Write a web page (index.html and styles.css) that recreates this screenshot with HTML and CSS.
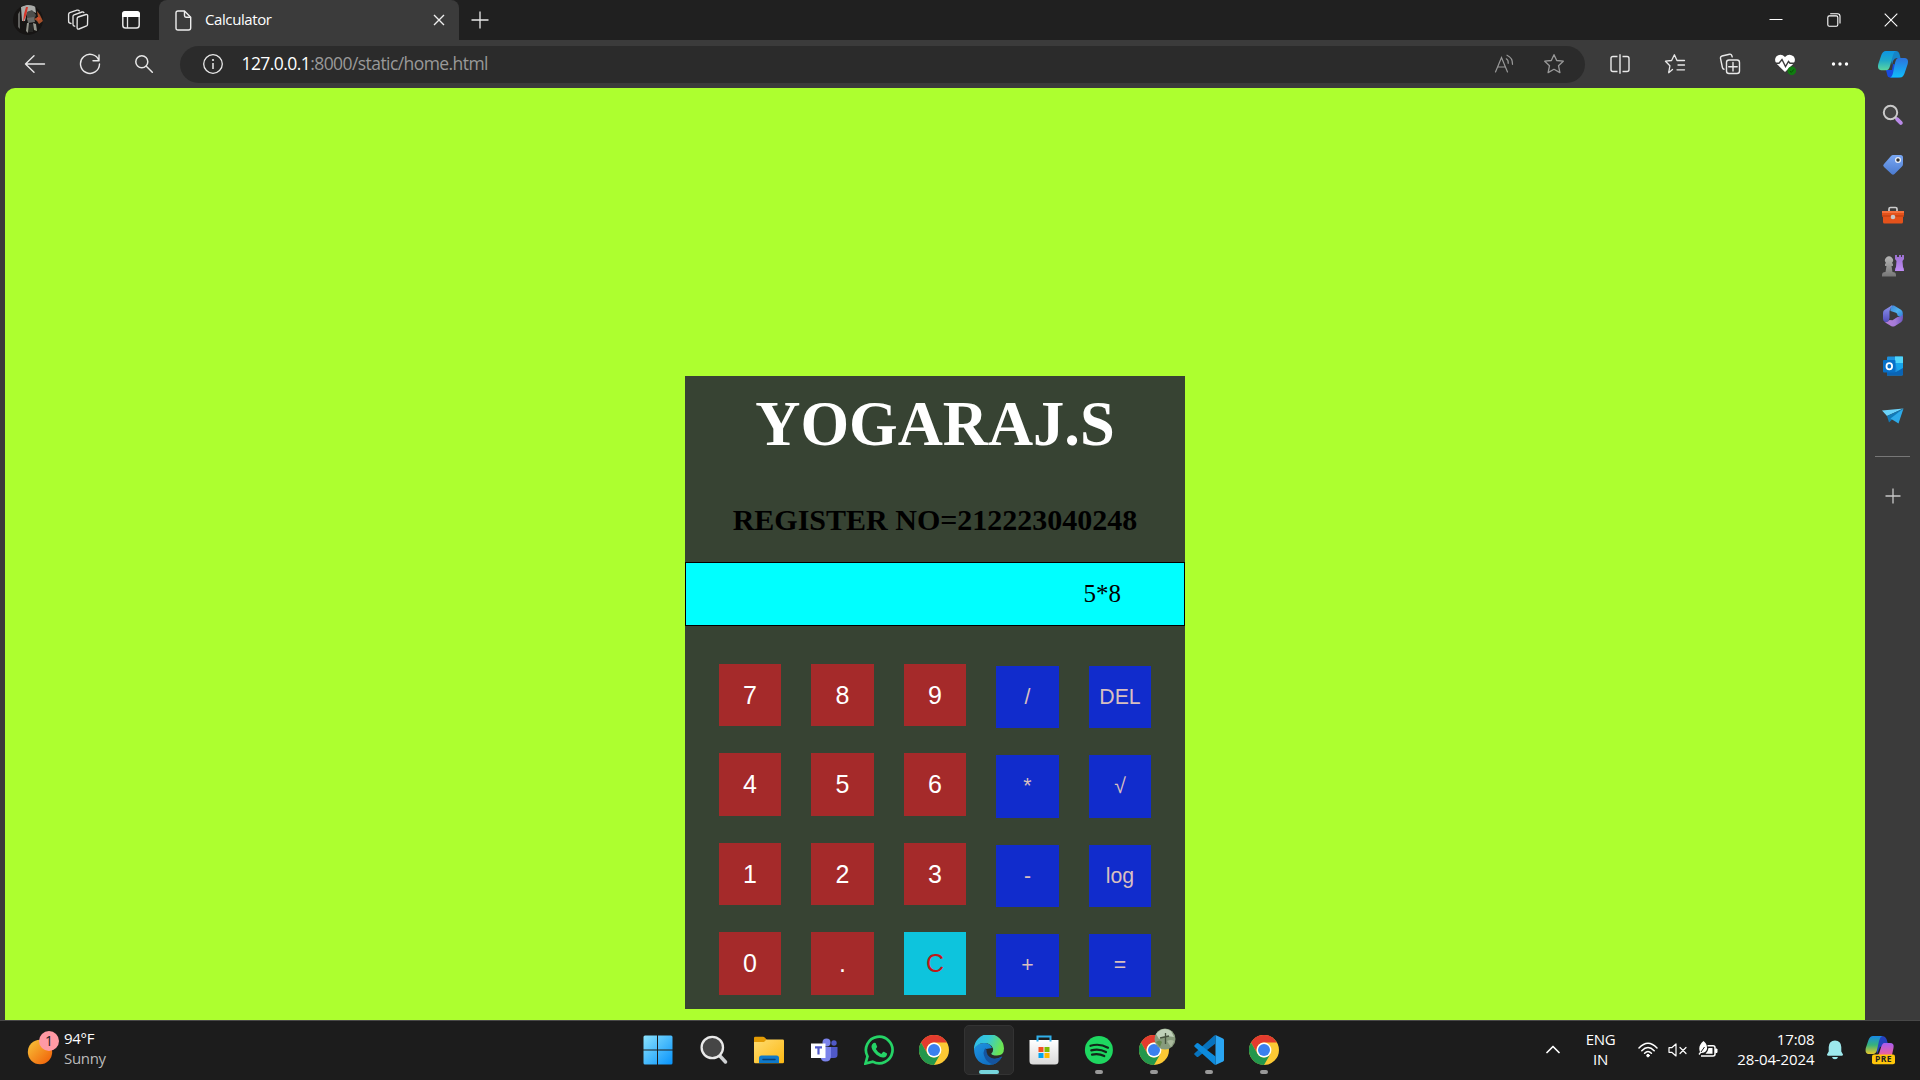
FILE: index.html
```html
<!DOCTYPE html>
<html lang="en">
<head>
<meta charset="utf-8">
<title>Calculator</title>
<link rel="stylesheet" href="styles.css">
</head>
<body>
<svg class="defs" width="0" height="0">
  <defs>
    <linearGradient id="gEdge" x1="0" y1="0" x2="1" y2=".3"><stop offset="0" stop-color="#2cb6ee"/><stop offset=".5" stop-color="#36c8d6"/><stop offset="1" stop-color="#6be453"/></linearGradient>
    <linearGradient id="gEdge2" x1="0" y1="0" x2="1" y2="1"><stop offset="0" stop-color="#1f95e2"/><stop offset="1" stop-color="#0b62b8"/></linearGradient>
    <linearGradient id="gWin" x1="0" y1="0" x2="1" y2="1"><stop offset="0" stop-color="#8be2fd"/><stop offset="1" stop-color="#0793fb"/></linearGradient>
    <linearGradient id="gFold" x1="0" y1="0" x2="1" y2="1"><stop offset="0" stop-color="#ffdc70"/><stop offset="1" stop-color="#fcb813"/></linearGradient>
    <linearGradient id="gSun" x1="0" y1="0" x2="1" y2="1"><stop offset="0" stop-color="#f8c63a"/><stop offset="1" stop-color="#f05a06"/></linearGradient>
    <linearGradient id="gCopA" x1="0" y1="0" x2="0" y2="1"><stop offset="0" stop-color="#0c95e4"/><stop offset=".5" stop-color="#20a9c8"/><stop offset="1" stop-color="#5bd6a0"/></linearGradient>
    <linearGradient id="gCopB" x1="0" y1="0" x2="0" y2="1"><stop offset="0" stop-color="#2c72dd"/><stop offset="1" stop-color="#10bdfb"/></linearGradient>
    <linearGradient id="gPreA" x1="0" y1="0" x2="0" y2="1"><stop offset="0" stop-color="#1789e8"/><stop offset=".5" stop-color="#36b27a"/><stop offset="1" stop-color="#e8c72a"/></linearGradient>
    <linearGradient id="gPreB" x1="0" y1="0" x2="0" y2="1"><stop offset="0" stop-color="#a65cf0"/><stop offset="1" stop-color="#f0609a"/></linearGradient>
    <linearGradient id="gTag" x1="0" y1="0" x2="0" y2="1"><stop offset="0" stop-color="#79a7f3"/><stop offset="1" stop-color="#4b7bd0"/></linearGradient>
    <linearGradient id="gBag" x1="0" y1="0" x2="0" y2="1"><stop offset="0" stop-color="#fff"/><stop offset="1" stop-color="#d9d9d9"/></linearGradient>
    <linearGradient id="gPawn" x1="0" y1="0" x2="0" y2="1"><stop offset="0" stop-color="#b5b5b5"/><stop offset="1" stop-color="#777"/></linearGradient>
    <linearGradient id="gRook" x1="0" y1="0" x2="0" y2="1"><stop offset="0" stop-color="#9a70d0"/><stop offset="1" stop-color="#c08cf5"/></linearGradient>
    <linearGradient id="gM1" x1="0" y1="0" x2="0" y2="1"><stop offset="0" stop-color="#8f95ee"/><stop offset="1" stop-color="#4f49b8"/></linearGradient>
    <linearGradient id="gM2" x1="0" y1="0" x2="1" y2="1"><stop offset="0" stop-color="#3d7fd8"/><stop offset=".5" stop-color="#4fb4ee"/><stop offset="1" stop-color="#2f74d6"/></linearGradient>
    <linearGradient id="gM3" x1="0" y1="0" x2="1" y2="0"><stop offset="0" stop-color="#b87fd8"/><stop offset=".6" stop-color="#a57bd8"/><stop offset="1" stop-color="#7057c0"/></linearGradient>
    <symbol id="chrome" viewBox="0 0 30 30">
      <circle cx="15" cy="15" r="15" fill="#fcc934"/>
      <path d="M2 7.500A15 15 0 0 1 28 7.500H15A7.500 7.500 0 0 0 8.500 18.800Z" fill="#e33b2e"/>
      <path d="M2 7.500L8.500 18.750A7.500 7.500 0 0 0 21.500 18.750L15 30A15 15 0 0 1 2 7.500Z" fill="#23974c"/>
      <circle cx="15" cy="15" r="7.400" fill="#fff"/><circle cx="15" cy="15" r="6" fill="#3b80ee"/>
    </symbol>
  </defs>
</svg>

<div class="screen">
  <header class="titlebar">
    <div class="leading">
      <div class="slot avatar"><svg width="30" height="30" viewBox="0 0 30 30"><clipPath id="av"><circle cx="15" cy="15" r="15"/></clipPath><g clip-path="url(#av)"><path fill="#171514" d="M0 0h30v30H0z"/><path fill="#a9aba8" d="M8 2l5-2 9 0 1 8-4-2-5 1-2 9-3 0z"/><path fill="#d6362a" d="M13 2l2 0-2 9-3 6 1-8z"/><path fill="#4c4d4b" d="M14 7l5-2 4 5-2 5-7 0z"/><path fill="#a4512c" d="M24 6l3 4 3 6-4 3-2-3-3-2 4-2z"/><path fill="#6a6b69" d="M14 13l7-1 1 5-7 1z"/><path fill="#96978e" d="M14 18l2 0-1 10-2-2zM20 18l3 1 1 7-3-1z"/><path fill="#d5482c" d="M24 12l4 1-3 3z"/><path fill="#60605e" d="M5 9l2-3v18l-2-2z"/><path fill="#272725" d="M16 19h4v8h-4z"/></g></svg></div>
      <div class="slot"><svg width="22" height="22" viewBox="0 0 22 22" fill="none" stroke="#e4e4e4" stroke-width="1.35" stroke-linejoin="round" stroke-linecap="round"><path d="M10.200 9.200Q10.300 8.300 11.200 8L19 5.500Q20.800 5.200 20.700 7L20.500 15.500Q20.400 16.500 19.600 16.900L12 20Q10.200 20.600 10.100 18.700Z"/><path d="M7.700 17.200Q6 17.100 6 15.500V7.400Q6 6.200 7.100 5.800L15 3Q16.400 2.600 16.900 3.600"/><path d="M4 14.500Q1.500 14.200 1.600 12.300V5.300Q1.700 4 2.800 3.600L10 1.200Q11.700.8 12.300 1.800"/></svg></div>
      <div class="slot"><svg width="20" height="20" viewBox="0 0 20 20"><rect x="1.800" y="2" width="16.400" height="16" rx="2.800" fill="none" stroke="#e4e4e4" stroke-width="1.500"/><path d="M1 7V4q0-3 3-3h12q3 0 3 3v3z" fill="#fff"/><path d="M6.500 7v11" stroke="#e4e4e4" stroke-width="1.300"/></svg></div>
    </div>
    <div class="tab">
      <svg class="file" width="17" height="21" viewBox="0 0 17 21" fill="none" stroke="#eee" stroke-width="1.400" stroke-linejoin="round"><path d="M3 1H9.500L15.700 7.200V17.800Q15.700 20 13.500 20H3Q1 20 1 18V3Q1 1 3 1Z"/><path d="M9.500 1V5.500Q9.500 7.200 11 7.200H15.700"/></svg>
      <span class="tab-title">Calculator</span>
      <svg width="12" height="12" viewBox="0 0 12 12" stroke="#eee" stroke-width="1.400"><path d="M1 1l10 10M11 1L1 11"/></svg>
    </div>
    <svg class="newtab" width="18" height="18" viewBox="0 0 18 18" stroke="#e8e8e8" stroke-width="1.300"><path d="M9 .5v17M.5 9h17"/></svg>
    <div class="window-controls">
      <svg width="14" height="14" viewBox="0 0 14 14" stroke="#fff"><path d="M.5 6.500h13"/></svg>
      <svg width="14" height="14" viewBox="0 0 14 14" fill="none" stroke="#fff" stroke-width="1.100"><rect x=".8" y="2.900" width="10" height="10.300" rx="1.500"/><path d="M3.200.8H10.500Q13 .8 13 3.300V10.500"/></svg>
      <svg width="14" height="14" viewBox="0 0 14 14" stroke="#fff" stroke-width="1.100"><path d="M.7.700l12.600 12.600M13.300.700L.7 13.300"/></svg>
    </div>
  </header>

  <nav class="toolbar">
    <div class="nav-buttons">
      <svg width="22" height="20" viewBox="0 0 22 20" fill="none" stroke="#e8e8e8" stroke-width="1.400" stroke-linecap="round" stroke-linejoin="round"><path d="M10 1.800L1.500 10l8.500 8.200M1.500 10H20.500"/></svg>
      <svg width="22" height="22" viewBox="0 0 22 22" fill="none" stroke="#e8e8e8" stroke-width="1.400" stroke-linecap="round" stroke-linejoin="round"><path d="M20 7.800A9.500 9.500 0 1 0 20.500 11M20 2v5.800h-6"/></svg>
      <svg width="20" height="20" viewBox="0 0 20 20" fill="none" stroke="#e8e8e8" stroke-width="1.500" stroke-linecap="round"><circle cx="7.800" cy="7.800" r="6"/><path d="M12.300 12.300l6 6"/></svg>
    </div>
    <div class="address">
      <svg width="22" height="22" viewBox="0 0 22 22"><circle cx="11" cy="11" r="9.300" fill="none" stroke="#e8e8e8" stroke-width="1.300"/><path d="M11 10v6" stroke="#e8e8e8" stroke-width="1.500"/><circle cx="11" cy="7" r="1.100" fill="#e8e8e8"/></svg>
      <span class="url"><b>127.0.0.1</b>:8000/static/home.html</span>
      <svg class="aloud" width="20" height="20" viewBox="0 0 20 20" fill="none" stroke="#999" stroke-width="1.200" stroke-linecap="round"><path d="M1.500 18L7.500 3.500L13.500 18M3.500 13h8M12.300 4.800Q14.500 6.200 14.200 9.300M13 1.200Q18.800 3.800 18.500 10.300"/></svg>
      <svg class="star" width="22" height="22" viewBox="0 0 22 22" fill="none" stroke="#999" stroke-width="1.300" stroke-linejoin="round"><path d="M11 1.700L13.700 7.500L20.300 8.200L15.500 12.700L16.900 19.600L11 16.300L5.100 19.600L6.500 12.700L1.700 8.200L8.300 7.500Z"/></svg>
    </div>
    <div class="actions">
      <div><svg width="22" height="22" viewBox="0 0 22 22" fill="none" stroke="#e8e8e8" stroke-width="1.400"><path d="M8.500 3.500H4Q2 3.500 2 5.500V16.500Q2 18.500 4 18.500H8.500M13.500 3.500H18Q20 3.500 20 5.500V16.500Q20 18.500 18 18.500H13.500M11 1.200v19.600"/></svg></div>
      <div><svg width="22" height="22" viewBox="0 0 22 22" fill="none" stroke="#e8e8e8" stroke-width="1.300" stroke-linejoin="round" stroke-linecap="round"><path d="M8.500 16.500L4.700 19.700L5.900 12.800L1.500 8.200L7.600 7.500L10.400 1.800L13 7.500H20.500M14 12h6.500M13 16.800h7.500"/></svg></div>
      <div><svg width="22" height="22" viewBox="0 0 22 22" fill="none" stroke="#e8e8e8" stroke-width="1.400" stroke-linecap="round"><rect x="7.500" y="7" width="13" height="13.500" rx="2.500"/><path d="M14 9.500v8.500M9.700 13.700h8.500M5 16.200Q3.700 16 3.400 14.500L1.500 5.300Q1.200 3.500 3 3L10.500 1.200Q12.500.800 13.200 3.800"/></svg></div>
      <div><svg width="22" height="22" viewBox="0 0 22 22"><path d="M11 19L2.300 10.500Q-.3 6.500 2.500 3.300Q7-.2 11 4Q15-.2 19.500 3.300Q22.300 6.500 19.700 10.500Z" fill="#fff"/><path d="M0 10.300H5L8 6.500L11.500 13.500L14.500 8.500L16 10.300H22" stroke="#3b3b3b" stroke-width="1.400" fill="none"/><circle cx="17.800" cy="17.800" r="4.300" fill="#107c10"/><path d="M15.800 18l1.500 1.400 2.600-3" stroke="#054d05" fill="none"/></svg></div>
      <div><svg width="18" height="6" viewBox="0 0 18 6" fill="#fff"><circle cx="2.500" cy="3" r="1.700"/><circle cx="9" cy="3" r="1.700"/><circle cx="15.500" cy="3" r="1.700"/></svg></div>
    </div>
    <svg class="copilot" width="30" height="27" viewBox="0 0 30 27"><path d="M9 0H18Q20.500 0 21.500 3L22.500 7H19Q16.500 7 15 10L14 14L11 0Z" fill="#1684c8"/><path d="M10 26.500H20Q23 26.500 24.500 22L26 16L15 13L14 19H8L9 23Q9.500 26.500 12 26.500Z" fill="#174be0"/><path d="M8 0H18Q16 .500 15 4L12 15Q11 19.200 8 19.200H3Q-1 19 .300 13L3 5Q4.500 0 8 0Z" fill="url(#gCopA)"/><path d="M20 7H26.500Q31 7 29.700 13L27 21Q25.500 26.500 22 26.500H12Q14 26 15 22L17 12Q18 7.500 20 7Z" fill="url(#gCopB)"/></svg>
  </nav>

  <main class="content">
    <section class="page">
      <div class="calculator">
        <h1>YOGARAJ.S</h1>
        <h2>REGISTER NO=212223040248</h2>
        <div class="display">5*8</div>
        <div class="keys">
          <button>7</button><button>8</button><button>9</button><button class="op">/</button><button class="op">DEL</button>
          <button>4</button><button>5</button><button>6</button><button class="op">*</button><button class="op">√</button>
          <button>1</button><button>2</button><button>3</button><button class="op">-</button><button class="op">log</button>
          <button>0</button><button>.</button><button class="clear">C</button><button class="op">+</button><button class="op">=</button>
        </div>
      </div>
    </section>
    <aside class="sidebar">
      <div><svg width="22" height="22" viewBox="0 0 22 22"><circle cx="8.500" cy="8.500" r="6.700" fill="#444" stroke="#c9c9c9" stroke-width="2"/><path d="M13 13l2 2" stroke="#ccc" stroke-width="2"/><path d="M15.300 15.300l3.500 3.500" stroke="#b98ae8" stroke-width="4" stroke-linecap="round"/></svg></div>
      <div><svg width="22" height="22" viewBox="0 0 22 22"><path d="M11 1H18.500Q21 1 21 3.500V10Q21 11.500 20 12.500L12.500 20Q11 21.500 9.500 20L2 13Q.300 11.500 2 10L9 2Q10 1 11 1Z" fill="url(#gTag)"/><circle cx="16" cy="6" r="2.400" fill="#333" stroke="#e8eefa" stroke-width="1.300"/></svg></div>
      <div><svg width="22" height="18" viewBox="0 0 22 18"><path d="M7 5V3Q7 1.500 8.500 1.500H13.500Q15 1.500 15 3V5" fill="none" stroke="#ccc" stroke-width="1.700"/><path d="M0 5h22v4q0 2-1 2v5q0 1.500-1.500 1.500h-17Q1 17.500 1 16v-5Q0 11 0 9z" fill="#e4521b"/><path d="M0 5h22v2H0z" fill="#f4713d"/><path d="M0 10h22" stroke="#b83a0e"/><circle cx="11" cy="11" r="2.300" fill="#c8c8c8"/></svg></div>
      <div><svg width="22" height="22" viewBox="0 0 22 22"><path d="M13 0h2v2h2V0h2v2h1V0h2v4l-1.500 2L21 12q1 1 1 4h-9q0-3 1-4l.500-6L13 4z" fill="url(#gRook)"/><path d="M4 8a4 4 0 1 1 6 0L11 9v2H9.500l1 6q3.500 0 3.500 3v1.500H0V20q0-3 3.500-3l1-6H3V9z" fill="url(#gPawn)"/></svg></div>
      <div><svg width="22" height="22" viewBox="0 0 22 22"><path d="M9 1Q10.500 0 12 .600L19 4.800Q20.800 6 20.800 8V13.500L15.500 10.500Q15.500 8.500 14 7.700L8.500 6Q7.500 3 9 1Z" fill="url(#gM2)"/><path d="M10.500.300Q7.500 3 7.500 6.500V13Q7.500 16 4.500 17.800L2.500 16.800Q1 16 1 13.800V8Q1 5.800 2.800 4.700L8.500 1.200Q9.500.500 10.500.300Z" fill="url(#gM1)"/><path d="M20.800 9.500V14Q20.800 16 19 17.200L13 20.900Q11 22 9 20.900L2 16.800Q5 18.500 7.500 15L10.500 15.200L15.500 12Q19.500 12 20.800 9.500Z" fill="url(#gM3)"/></svg></div>
      <div><svg width="22" height="20" viewBox="0 0 22 20"><path d="M5 1.500Q5 .500 6 .500H19.500Q21 .500 21 2V18Q21 19.500 19.500 19.500H5Z" fill="#1c91df"/><path d="M13 .500h8V7h-8z" fill="#50d5fa"/><path d="M13 7h8v5l-5 3z" fill="#17a4eb"/><path d="M21 12v6q0 1.500-1.500 1.500H5V16h9z" fill="#0a64b5"/><rect x="1" y="4" width="12.500" height="12.500" rx="1" fill="#0870c8"/><ellipse cx="7.300" cy="10.200" rx="2.800" ry="3.100" fill="none" stroke="#fff" stroke-width="1.800"/></svg></div>
      <div><svg width="22" height="18" viewBox="0 0 22 18"><path d="M0 3.500L21.500 1.500L5 9Z" fill="#6bd3fa"/><path d="M5 9L21.500 1.500L7 15.500Z" fill="#127ab8"/><path d="M8.500 11.500L21.500 1.500L16.500 16.500Z" fill="#2daae9"/></svg></div>
      <hr>
      <svg class="add" width="16" height="16" viewBox="0 0 16 16" stroke="#c8c8c8" stroke-width="1.300"><path d="M8 .5v15M.5 8h15"/></svg>
    </aside>
  </main>

  <footer class="taskbar">
    <div class="weather">
      <svg width="34" height="36" viewBox="0 0 34 36"><circle cx="13" cy="23" r="12.200" fill="url(#gSun)"/><circle cx="22" cy="12" r="10" fill="#ff99a4"/><text x="22" y="17" text-anchor="middle" class="badge">1</text></svg>
      <div class="lines"><span>94°F</span><span class="dim">Sunny</span></div>
    </div>
    <div class="apps">
      <div class="app start"><svg width="30" height="30" viewBox="0 0 30 30" fill="url(#gWin)"><path d="M2 .500H14V14.500H.500V2Q.500.500 2 .500ZM15 .500H28Q29.500.500 29.500 2V14.500H15ZM.500 15.500H14V29.500H2Q.500 29.500.500 28ZM15 15.500H29.500V28Q29.500 29.500 28 29.500H15Z"/></svg></div>
      <div class="app"><svg width="28" height="30" viewBox="0 0 28 30"><path d="M20 21l5.500 6" stroke="#cfd1d3" stroke-width="3.500" stroke-linecap="round"/><circle cx="12.300" cy="12.500" r="10.700" fill="#464646" stroke="#e9e9e9" stroke-width="2.300"/></svg></div>
      <div class="app"><svg width="30" height="28" viewBox="0 0 30 28"><path d="M0 2Q0 .700 1.300.700H9Q10 .700 11 1.700L14 5V9H0Z" fill="#e39b04"/><path d="M0 6H10L12.500 3.500H28.700Q30 3.500 30 4.800V26Q30 27.300 28.700 27.300H1.300Q0 27.300 0 26Z" fill="url(#gFold)"/><path d="M5 27V22Q5 19.500 7.500 19.500H22.500Q25 19.500 25 22V27Z" fill="#0f79c9"/><path d="M9 23.500h12" stroke="#063e73" stroke-width="1.500" stroke-linecap="round"/></svg></div>
      <div class="app"><svg width="28" height="26" viewBox="0 0 28 26"><circle cx="24" cy="6" r="2.700" fill="#5059c9"/><path d="M20 10H27.500V18Q27.500 21 24 21H20Z" fill="#5059c9"/><circle cx="16.500" cy="5.500" r="4" fill="#7b83eb"/><path d="M10 10H21V19Q21 24.500 15.500 24.500Q11 24.500 10 19Z" fill="#7b83eb"/><rect x="1" y="6.500" width="14.500" height="14.500" fill="#fff"/><path d="M5 10.300h7M8.500 10v7.500" stroke="#5059c9" stroke-width="2.200"/></svg></div>
      <div class="app"><svg width="30" height="30" viewBox="0 0 30 30"><path d="M1.500 28.500L3.500 21.300A13.300 13.300 0 1 1 8.700 26.600Z" fill="#1c1c1c" stroke="#25d366" stroke-width="2.700"/><path d="M9.500 8Q10.700 7.300 11.600 8L13.200 11.700Q13.200 12.300 11.800 14Q13.700 17.500 17.300 19L19 17Q19.500 16.500 20 16.800L23 18.400Q23.300 21.300 20 22.500Q17 23.200 12.500 19.800Q7 14.500 7.500 11Q8 8.800 9.500 8Z" fill="#25d366"/></svg></div>
      <div class="app"><svg width="30" height="30"><use href="#chrome"/></svg></div>
      <div class="app active"><svg width="30" height="30" viewBox="0 0 30 30"><path d="M0 14Q3 8 10 8Q16 8 18 13L12 14Q11 20 16 23Q21 25.500 28 21.500Q24 30 15 30Q.500 29 0 14Z" fill="url(#gEdge2)"/><path d="M11.500 13Q8 17 11 23Q13 27.500 19 29.400Q25 27.500 28.300 21.500Q23 25 17.500 23Q12 20 12.500 15Z" fill="#15549e"/><path d="M0 14.500A15 15 0 0 1 30 13.500Q30 20.500 23 20.500Q17.500 20.500 17.300 18.500Q19.500 17 19 13.500Q16.500 7.500 9.500 8Q3 8.500 0 14.500Z" fill="url(#gEdge)"/></svg></div>
      <div class="app"><svg width="30" height="30" viewBox="0 0 30 30"><path d="M8.500 6V1.500H21.500V6" fill="none" stroke="#30afe9" stroke-width="2"/><path d="M.5 5H29.500V26Q29.500 29.500 26 29.500H4Q.500 29.500.500 26Z" fill="url(#gBag)"/><path d="M8.500 5V6.500M21.500 5V6.500" stroke="#30afe9" stroke-width="2"/><path d="M9.500 12h5v5h-5z" fill="#f25022"/><path d="M15.500 12h5v5h-5z" fill="#7fba00"/><path d="M9.500 18h5v5h-5z" fill="#00a4ef"/><path d="M15.500 18h5v5h-5z" fill="#ffb900"/></svg></div>
      <div class="app running"><svg width="30" height="30" viewBox="0 0 30 30"><circle cx="14.900" cy="15" r="14" fill="#1ed760"/><path d="M6.500 10.800Q15.500 8 24 12.700M7.300 15.400Q15 13.200 22 17M8 19.600Q14.500 18 20.300 21" fill="none" stroke="#12261a" stroke-width="2.200" stroke-linecap="round"/></svg></div>
      <div class="app running profile"><svg width="30" height="30"><use href="#chrome"/></svg><svg class="profile-badge" width="22" height="22" viewBox="0 0 22 22"><circle cx="11" cy="11" r="10.500" fill="#879b7c"/><path d="M2 6Q9-2 17 3L20 9L13 8L5 11Z" fill="#bfd0b9"/><path d="M2 14q4-3 6 0l-2 5z" fill="#65894f"/><path d="M13 13q4-2 7 0l-3 6z" fill="#a9b99c"/><path d="M11.500 5v11M6 10l9-2" stroke="#46523f" stroke-width="1.300"/></svg></div>
      <div class="app running"><svg width="30" height="30" viewBox="0 0 30 30"><path d="M21.500 0L29 3.500Q30 4 30 5V25Q30 26 29 26.500L21.500 30Z" fill="#2aa5f2"/><path d="M21.500 0V8.500L4.300 21.700Q3.500 22.300 2.700 21.700L.600 19.700Q-.200 18.900.600 18.200L20 .800Z" fill="#0873bd"/><path d="M21.500 30V21.500L4.300 8.300Q3.500 7.700 2.700 8.300L.600 10.300Q-.200 11.100.600 11.800L20 29.200Z" fill="#0d8bdd"/></svg></div>
      <div class="app running"><svg width="30" height="30"><use href="#chrome"/></svg></div>
    </div>
    <div class="tray">
      <svg width="14" height="9" viewBox="0 0 14 9" fill="none" stroke="#fff" stroke-width="1.700" stroke-linecap="round" stroke-linejoin="round"><path d="M1 7.500L7 1.500L13 7.500"/></svg>
      <div class="lines lang"><span>ENG</span><span>IN</span></div>
      <div class="status">
        <svg width="20" height="16" viewBox="0 0 20 16" fill="none" stroke="#fff" stroke-width="1.500" stroke-linecap="round"><path d="M1 6Q10-3.500 19 6M3.800 8.800Q10 2.300 16.200 8.800M6.600 11.300Q10 7.800 13.400 11.300"/><circle cx="10" cy="13.600" r="1.300" fill="#fff" stroke-width="1"/></svg>
        <svg width="20" height="14" viewBox="0 0 20 14" fill="none" stroke="#fff" stroke-width="1.200" stroke-linejoin="round" stroke-linecap="round"><path d="M1 4.700H3.700L8 1V13L3.700 9.300H1ZM12 4.500l6 6M18 4.500l-6 6"/></svg>
        <svg width="20" height="17" viewBox="0 0 20 17"><path d="M9.500 4.700H15Q17 4.700 17 6.700V13Q17 15 15 15H3" fill="none" stroke="#fff" stroke-width="1.500"/><path d="M17.500 8h1.500v3.500h-1.500z" fill="#fff" stroke="#fff"/><path d="M10.500 7h4v5.700H7.500Q10 11 10.500 7Z" fill="#fff"/><path d="M5.500 0Q9.500 3 9 8Q8 12 3 12L1.500 14L.500 13L2 11Q-.500 5 5.500 0Z" fill="#fff"/><path d="M3 11L6.500 6" stroke="#1c1c1c"/></svg>
      </div>
      <div class="lines clock"><span>17:08</span><span>28-04-2024</span></div>
      <svg class="bell" width="18" height="20" viewBox="0 0 18 20" fill="#9de8ec"><path d="M9 .500Q15 .700 15.300 7V11.500L17 14.500Q17.200 15.600 16 15.700H2Q.800 15.600 1 14.500L2.700 11.500V7Q3 .700 9 .500ZM6 17H12Q11.500 19.300 9 19.300Q6.500 19.300 6 17Z"/></svg>
      <svg class="preview" width="30" height="30" viewBox="0 0 30 30"><path d="M10 1H17Q20 1 21.500 4L23 9L15 12L12 19L10 9Z" fill="#2342bd"/><path d="M8 1H17Q15 2 14 6L12 15Q11 19 8 19H3Q-.200 18.500.800 13L3.500 5Q5 1 8 1Z" fill="url(#gPreA)"/><path d="M19 8H25Q29.500 8 28.500 13L27 20H13Q14.500 18 15.500 14Q17 8.500 19 8Z" fill="url(#gPreB)"/><rect x="7" y="19.500" width="23" height="9.700" rx="2" fill="#ffc60a"/><text x="18.500" y="27.300" text-anchor="middle" class="pre">PRE</text></svg>
    </div>
  </footer>
</div>
</body>
</html>
```
FILE: styles.css
```css
* { box-sizing: border-box; }
body { margin: 0; overflow: hidden; background: #1c1c1c; font-family: "Open Sans", "Noto Sans", sans-serif; color: #fff; }
svg { display: block; flex: none; }
.defs { position: absolute; }
.screen { width: 1920px; height: 1080px; display: flex; flex-direction: column; }

.titlebar { height: 40px; display: flex; align-items: center; background: #202020; }
.leading { width: 159px; height: 40px; display: flex; background: #202020; border-bottom-right-radius: 5px; }
.slot { width: 53px; display: flex; align-items: center; justify-content: center; }
.slot.avatar { width: 51px; padding-left: 4px; }
.tab { width: 300px; height: 40px; padding: 0 14px 0 16px; display: flex; align-items: center; background: #3b3b3b; border-radius: 8px 8px 0 0; }
.tab-title { flex: 1; margin: -2px 0 0 13px; font-size: 15px; letter-spacing: -0.4px; line-height: 20px; }
.newtab { margin-left: 12px; }
.window-controls { margin-left: auto; margin-right: 22px; display: flex; gap: 43.5px; }

.toolbar { height: 48px; display: flex; align-items: center; background: #3b3b3b; }
.nav-buttons { width: 180px; padding-left: 24px; display: flex; align-items: center; gap: 33px; }
.address { width: 1405px; height: 37px; padding: 0 20px 0 22px; display: flex; align-items: center; background: #2b2b2b; border-radius: 19px; }
.url { flex: 1; margin: -3px 0 0 17.500px; font-size: 17.5px; letter-spacing: -0.57px; color: #999; }
.url b { color: #fff; font-weight: 400; }
.star { margin-left: 29px; }
.actions { padding-left: 7px; display: flex; }
.actions div { width: 55.2px; display: flex; align-items: center; justify-content: center; }
.copilot { margin-left: 10px; }

.content { height: 932px; padding-left: 5px; display: flex; background: #3b3b3b; }
.page { width: 1860px; padding-top: 288px; background: #adff2f; border-radius: 10px 10px 0 0; }
.calculator { width: 500px; height: 633px; margin: 0 auto; background: #374333; font-family: "Liberation Serif", serif; text-align: center; }
.calculator h1 { margin: 0; height: 96px; line-height: 96px; font-size: 62.5px; }
.calculator h2 { margin: 0; height: 90px; line-height: 96px; font-size: 30px; color: #000; }
.display { height: 64px; border: 1px solid #000; background: #00ffff; color: #000; font-size: 25px; line-height: 62px; text-align: right; padding-right: 63px; }
.keys { padding: 37.5px 33.75px 0; display: grid; grid-template-columns: repeat(5, 62.5px); grid-auto-rows: 62.5px; column-gap: 30px; row-gap: 27px; }
.keys button { margin: 0; border: 0; padding: 1px 0 0; background: #a52a2a; color: #fff; font: 25px "Liberation Sans", sans-serif; }
.keys .op { background: #112ccc; color: #d8bfc0; font-size: 21.25px; margin: 2px 0 -2px; }
.keys .clear { background: #0dc4dd; color: #c01818; }

.sidebar { width: 55px; padding-top: 2px; display: flex; flex-direction: column; align-items: center; }
.sidebar div { height: 50.2px; display: flex; align-items: center; }
.sidebar hr { width: 35px; height: 1px; margin: 15px 0 31px; border: 0; background: #777; }

.taskbar { height: 60px; display: flex; align-items: center; background: #1c1c1c; border-top: 1px solid #484848; padding-bottom: 2px; }
.weather { width: 633.5px; padding-left: 27px; display: flex; align-items: center; }
.weather svg { margin-top: -5px; }
.badge { font: 14px "Open Sans", sans-serif; fill: #222; }
.lines { display: flex; flex-direction: column; font-size: 15px; line-height: 20px; letter-spacing: -0.3px; margin-top: -1px; }
.weather .lines { margin: -3px 0 0 3px; }
.dim { color: #bbb; }
.apps { display: flex; gap: 5px; }
.app { width: 50px; height: 50px; border-radius: 5px; display: flex; align-items: center; justify-content: center; position: relative; }
.start { right: 1px; }
.active { background: #292929; border: 1px solid #333; }
.active::after, .running::after { content: ""; position: absolute; bottom: 0; width: 20px; height: 4px; border-radius: 2px; background: #76d5dc; }
.running::after { width: 8px; background: #999; bottom: 1px; }
.profile-badge { position: absolute; left: 25px; top: 3px; }
.tray { flex: 1; padding-left: 257px; display: flex; align-items: center; }
.lang { width: 46px; margin-left: 18px; align-items: center; }
.status { margin-left: 14px; display: flex; align-items: center; gap: 10px; }
.clock { width: 92px; margin-left: 5px; align-items: flex-end; white-space: nowrap; letter-spacing: -0.1px; }
.bell { margin-left: 11px; }
.preview { margin-left: 21px; }
.pre { font: 700 8.5px "Open Sans", sans-serif; fill: #222; letter-spacing: .5px; }
```
